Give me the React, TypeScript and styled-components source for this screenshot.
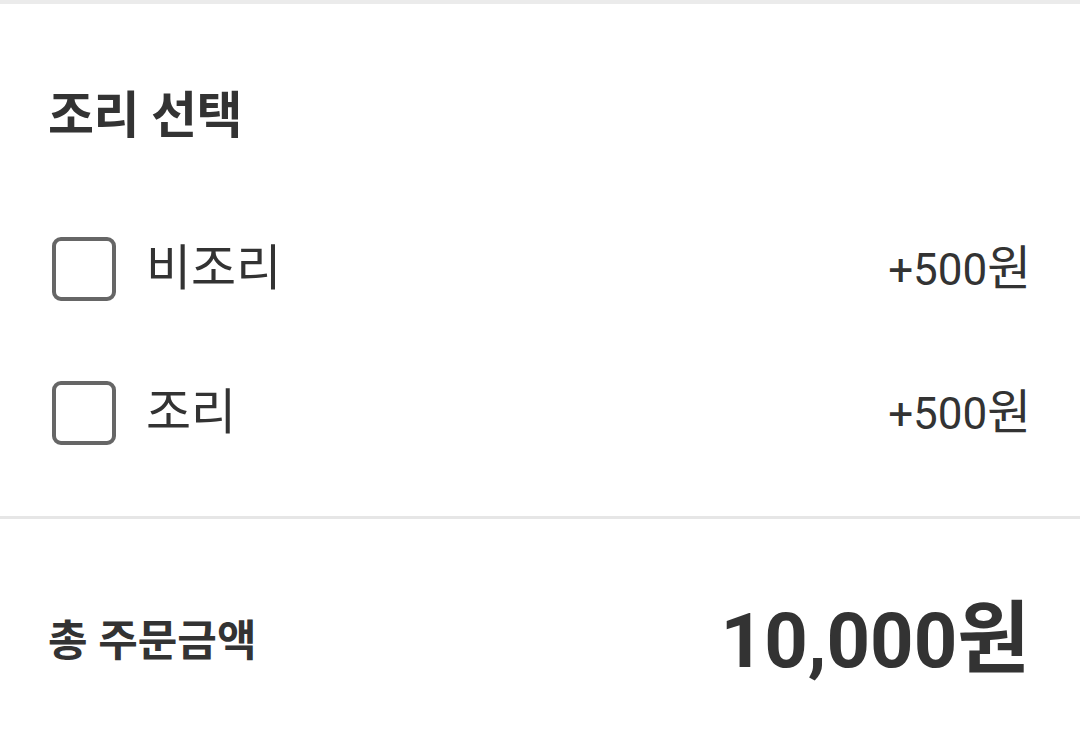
import React from "react";
import styled, { createGlobalStyle } from "styled-components";

const textColor = "#333333";
const fontStack = `"Roboto", "Noto Sans CJK KR", sans-serif`;

const GlobalStyle = createGlobalStyle`
  body {
    margin: 0;
    background: #ffffff;
    font-family: ${fontStack};
    color: ${textColor};
  }
`;

const Screen = styled.div`
  display: flex;
  flex-direction: column;
  width: 1080px;
  height: 732px;
  overflow: hidden;
  background: #ffffff;
`;

const OptionSection = styled.section`
  display: flex;
  flex-direction: column;
  padding: 82px 49px 31px 48px;
  border-top: 4px solid #ebebeb;
  border-bottom: 3px solid #e6e6e6;
`;

const SectionTitle = styled.h2`
  margin: 0 0 51px;
  font-size: 50px;
  line-height: 60px;
  font-weight: 700;
  letter-spacing: -0.5px;
`;

const OptionRow = styled.label`
  display: flex;
  align-items: center;
  height: 144px;
`;

const CheckBox = styled.span`
  box-sizing: border-box;
  width: 64px;
  height: 64px;
  margin-left: 4px;
  margin-right: 30px;
  border: 4px solid #666666;
  border-radius: 9px;
  flex-shrink: 0;
`;

const OptionName = styled.span`
  flex: 1;
  font-size: 49px;
  line-height: 60px;
`;

const OptionPrice = styled.span`
  font-size: 44px;
  line-height: 60px;
`;

const Unit = styled.span<{ $scale: number }>`
  font-size: ${({ $scale }) => $scale}em;
`;

const TotalRow = styled.div`
  display: flex;
  align-items: center;
  justify-content: space-between;
  padding: 76px 50px 0 48px;
`;

const TotalLabel = styled.span`
  font-size: 43px;
  line-height: 90px;
  font-weight: 700;
`;

const TotalPrice = styled.span`
  font-size: 76px;
  line-height: 90px;
  font-weight: 700;
`;

const options = [
  { name: "비조리", price: "+500" },
  { name: "조리", price: "+500" },
];

export default function App() {
  return (
    <>
      <GlobalStyle />
      <Screen>
        <OptionSection>
          <SectionTitle>조리 선택</SectionTitle>
          {options.map((option) => (
            <OptionRow key={option.name}>
              <CheckBox />
              <OptionName>{option.name}</OptionName>
              <OptionPrice>
                {option.price}
                <Unit $scale={1.08}>원</Unit>
              </OptionPrice>
            </OptionRow>
          ))}
        </OptionSection>
        <TotalRow>
          <TotalLabel>총 주문금액</TotalLabel>
          <TotalPrice>
            10,000<Unit $scale={1.04}>원</Unit>
          </TotalPrice>
        </TotalRow>
      </Screen>
    </>
  );
}
